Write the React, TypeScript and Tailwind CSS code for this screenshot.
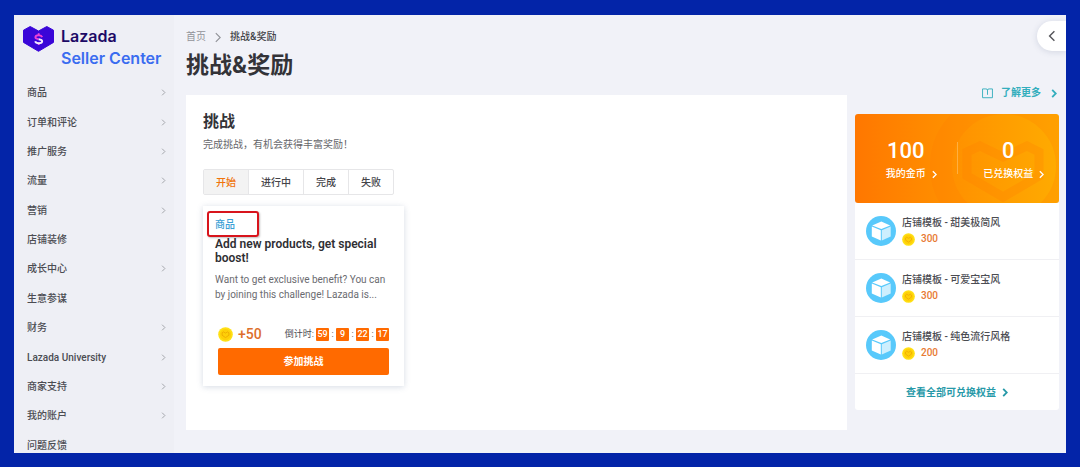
import React from 'react';

type NavItem = { label: string; expandable: boolean };

const navItems: NavItem[] = [
  { label: '商品', expandable: true },
  { label: '订单和评论', expandable: true },
  { label: '推广服务', expandable: true },
  { label: '流量', expandable: true },
  { label: '营销', expandable: true },
  { label: '店铺装修', expandable: false },
  { label: '成长中心', expandable: true },
  { label: '生意参谋', expandable: false },
  { label: '财务', expandable: true },
  { label: 'Lazada University', expandable: true },
  { label: '商家支持', expandable: true },
  { label: '我的账户', expandable: true },
  { label: '问题反馈', expandable: false },
];

const tabs = ['开始', '进行中', '完成', '失败'];
const countdown = ['59', '9', '22', '17'];

const rewards = [
  { name: '店铺模板 - 甜美极简风', cost: 300 },
  { name: '店铺模板 - 可爱宝宝风', cost: 300 },
  { name: '店铺模板 - 纯色流行风格', cost: 200 },
];

function Chevron({ className, weight = 1 }: { className: string; weight?: number }) {
  return (
    <svg viewBox="0 0 6 10" className={className} fill="none" stroke="currentColor" strokeWidth={weight} aria-hidden="true">
      <path d="M1 1l4 4-4 4" />
    </svg>
  );
}

function Coin({ className }: { className: string }) {
  return (
    <svg viewBox="0 0 16 16" className={className} fill="none" aria-hidden="true">
      <circle cx="8" cy="8" r="7.8" fill="#ffe014" />
      <circle cx="8" cy="8" r="6" fill="#fecf08" />
      <path d="M4.4 6.2 5.8 5.2 8 6.5l2.2-1.3 1.4 1v2.6L8 11.3 4.4 8.8z" stroke="#eda900" strokeWidth="0.9" />
    </svg>
  );
}

function BoxIcon() {
  return (
    <svg viewBox="0 0 30 30" className="size-[30px] shrink-0" aria-hidden="true">
      <circle cx="15" cy="15" r="15" fill="#58c9fb" />
      <path d="M15.3 5.6 24.2 9.4 15.3 13 6.2 9.4z" fill="#fff" />
      <path d="M5.8 10.6 14.8 14.2V24.6L5.8 20.6z" fill="#fff" />
      <path d="M24.7 10.6 15.8 14.2V24.6L24.7 20.6z" fill="#cdeffe" />
    </svg>
  );
}

function Logo() {
  return (
    <a href="#home" className="flex gap-[7px] pl-[9px] pt-[10px]">
      <svg viewBox="0 0 31 26" className="mt-px h-[26px] w-[31px] shrink-0" aria-hidden="true">
        <path
          d="M7.2.5 15.5 5 23.8.5 30.5 4.2V16.4L15.5 25.3.5 16.4V4.2z"
          fill="#3a06d8"
          stroke="#3a06d8"
          strokeLinejoin="round"
        />
        <path d="M15.7 7.2v2.6M15.7 16.4v2.6" stroke="#ee4fe0" strokeWidth="1.8" />
        <path d="M19.2 11.2c-.5-1.3-1.9-1.9-3.5-1.9-2 0-3.3.8-3.3 2 0 1.5 1.6 1.6 3.3 1.9" fill="none" stroke="#f03fd6" strokeWidth="1.9" />
        <path d="M15.7 13.2c2 .3 3.5.7 3.5 2.1 0 1.3-1.4 2-3.4 2-1.7 0-3.2-.6-3.6-2" fill="none" stroke="#f4eaff" strokeWidth="1.9" />
      </svg>
      <span className="flex flex-col whitespace-nowrap font-['Inter',sans-serif] text-[16px] font-semibold leading-[22px]">
        <span className="text-[#1d0a66]">Lazada</span>
        <span className="text-[#3a6cf0]">Seller Center</span>
      </span>
    </a>
  );
}

function Sidebar() {
  return (
    <aside className="flex w-[160px] shrink-0 flex-col overflow-hidden bg-[#eeeff5]">
      <Logo />
      <nav className="mt-[9px] grid h-[382px] shrink-0 auto-rows-fr">
        {navItems.map((item) => (
          <a key={item.label} href="#menu" className="flex items-center justify-between pl-[13px] pr-2 font-medium text-[#4b4c52]">
            {item.label}
            {item.expandable && <Chevron className="h-[7px] w-[5px] text-[#85868c]" />}
          </a>
        ))}
      </nav>
    </aside>
  );
}

function ChallengeCard() {
  return (
    <article className="mt-[11px] w-[201px] bg-white px-3 pb-[11px] pt-[5px] shadow-[0_1px_6px_rgba(70,90,130,0.22)]">
      <div className="-ml-2 flex h-[26px] w-[52px] items-center rounded-[3px] border-2 border-[#d8141c] pl-[6px] font-medium text-[#3b9fd6] shadow-[1px_1px_2px_rgba(0,0,0,0.25)]">
        商品
      </div>
      <h3 className="text-[12px] font-semibold leading-[14px] text-[#2f2f33]">Add new products, get special boost!</h3>
      <p className="mt-[7px] leading-[15px] text-[#6b6b70]">
        Want to get exclusive benefit? You can by joining this challenge! Lazada is...
      </p>
      <div className="mx-[3px] mt-[25px] flex h-[15px] items-center">
        <Coin className="size-[15px]" />
        <span className="ml-[5px] text-[14px] font-medium text-[#dd6f2c]">+50</span>
        <div className="ml-auto flex items-center text-[9px] text-[#4b4c52]">
          <span className="mr-[2px]">倒计时:</span>
          {countdown.map((part, i) => (
            <React.Fragment key={part}>
              {i > 0 && <span className="w-[7px] text-center">:</span>}
              <span className="h-[13px] w-[13px] rounded-[1px] bg-[#ff6a00] text-center font-medium leading-[13px] text-white">
                {part}
              </span>
            </React.Fragment>
          ))}
        </div>
      </div>
      <div className="mx-[3px] mt-[6px]">
        <button type="button" className="h-[27px] w-full rounded-[2px] bg-[#ff6a00] font-bold text-white">
          参加挑战
        </button>
      </div>
    </article>
  );
}

function Challenges() {
  return (
    <section className="min-w-0 flex-1 bg-white px-[17px] pb-11 pt-[17px]">
      <h2 className="text-[16px] font-bold leading-5 text-[#333338]">挑战</h2>
      <p className="mt-[5px] leading-4 text-[#66666b]">完成挑战，有机会获得丰富奖励！</p>
      <div role="tablist" className="mt-4 inline-flex h-[26px] rounded-[2px] border border-[#e6e6e8]">
        {tabs.map((tab, i) => (
          <button
            key={tab}
            type="button"
            role="tab"
            aria-selected={i === 0}
            className={
              i === 0
                ? 'bg-[#f3f3f3] px-3 font-medium text-[#f0730a]'
                : 'border-l border-[#e6e6e8] px-3 font-medium text-[#444449]'
            }
          >
            {tab}
          </button>
        ))}
      </div>
      <ChallengeCard />
    </section>
  );
}

function Balance({ value, label }: { value: number; label: string }) {
  return (
    <a href="#balance" className="flex flex-1 flex-col items-center">
      <span className="text-[22px] font-medium leading-[26px]">{value}</span>
      <span className="-mr-[11px] mt-[2px] flex items-center gap-[6px] font-medium leading-4">
        {label}
        <Chevron className="h-[9px] w-[5px]" weight={1.6} />
      </span>
    </a>
  );
}

function Rewards() {
  return (
    <aside className="w-[204px] shrink-0">
      <div className="relative flex h-[89px] overflow-hidden rounded-[3px] bg-linear-to-r from-[#ff7700] to-[#ffab00] pt-6 text-white">
        <svg viewBox="0 0 204 89" className="absolute inset-0 h-full w-full" aria-hidden="true">
          <circle cx="149" cy="52" r="63" fill="none" stroke="#ff7d00" strokeWidth="22" opacity="0.22" />
          <path d="M125 32 148 43 172 32 184 38V62L148 83 112 62V38z" fill="none" stroke="#ff7d00" strokeWidth="9" opacity="0.25" />
        </svg>
        <div className="relative flex w-full">
          <Balance value={100} label="我的金币" />
          <div className="mt-1 h-8 w-px bg-[#ffc36b]/60" />
          <Balance value={0} label="已兑换权益" />
        </div>
      </div>
      <div className="rounded-b-[3px] bg-white">
        <ul>
          {rewards.map((reward) => (
            <li key={reward.name} className="flex h-[57px] items-center gap-[6px] border-b border-[#f0f0f3] pl-[11px]">
              <BoxIcon />
              <div>
                <p className="font-medium leading-4 text-[#4b4c52]">{reward.name}</p>
                <p className="flex items-center gap-[6px] font-medium leading-4 text-[#e87a33]">
                  <Coin className="size-[13px]" />
                  {reward.cost}
                </p>
              </div>
            </li>
          ))}
        </ul>
        <a href="#rewards" className="flex h-9 items-center justify-center gap-[6px] font-bold text-[#2799a8]">
          查看全部可兑换权益
          <Chevron className="h-[9px] w-[6px]" weight={2} />
        </a>
      </div>
    </aside>
  );
}

export default function App() {
  return (
    <div className="flex h-screen bg-[#0324a8] px-[14px] pb-[14px] pt-[15px] font-['Roboto','Noto_Sans_CJK_SC',sans-serif] text-[10px]">
      <div className="flex min-w-0 flex-1 overflow-hidden bg-[#f1f2f8]">
        <Sidebar />
        <main className="min-w-0 flex-1 pl-3">
          <header className="flex items-start justify-between">
            <div>
              <nav className="flex items-center gap-2 pt-[14px] leading-4">
                <a href="#home" className="text-[#919298]">首页</a>
                <Chevron className="h-[11px] w-[8px] text-[#919298]" />
                <span className="font-medium text-[#444449]">挑战&amp;奖励</span>
              </nav>
              <h1 className="mt-[6px] text-[23px] font-bold leading-[30px] text-[#333338]">挑战&amp;奖励</h1>
            </div>
            <button
              type="button"
              aria-label="展开"
              className="mt-[6px] flex h-[30px] w-[29px] items-center justify-center rounded-l-full bg-white text-[#55555a] shadow-[0_1px_6px_rgba(70,90,130,0.18)]"
            >
              <Chevron className="h-3 w-2 rotate-180" weight={1.2} />
            </button>
          </header>
          <div className="flex items-start gap-2 pr-[7px] pt-[14px]">
            <Challenges />
            <div className="-mt-[10px]">
              <div className="mb-[13px] flex justify-end pr-[2px]">
                <a href="#learn" className="flex items-center font-bold leading-4 text-[#33aebd]">
                  <svg viewBox="0 0 12 12" className="mr-2 size-[11px]" fill="none" stroke="currentColor" aria-hidden="true">
                    <path d="M.6 1h3.6q1.8 0 1.8 1.2Q6 1 7.8 1h3.6v9.6H.6zM6 2.2V7.4" />
                  </svg>
                  了解更多
                  <Chevron className="ml-[10px] h-[9px] w-[6px]" weight={2} />
                </a>
              </div>
              <Rewards />
            </div>
          </div>
        </main>
      </div>
    </div>
  );
}
